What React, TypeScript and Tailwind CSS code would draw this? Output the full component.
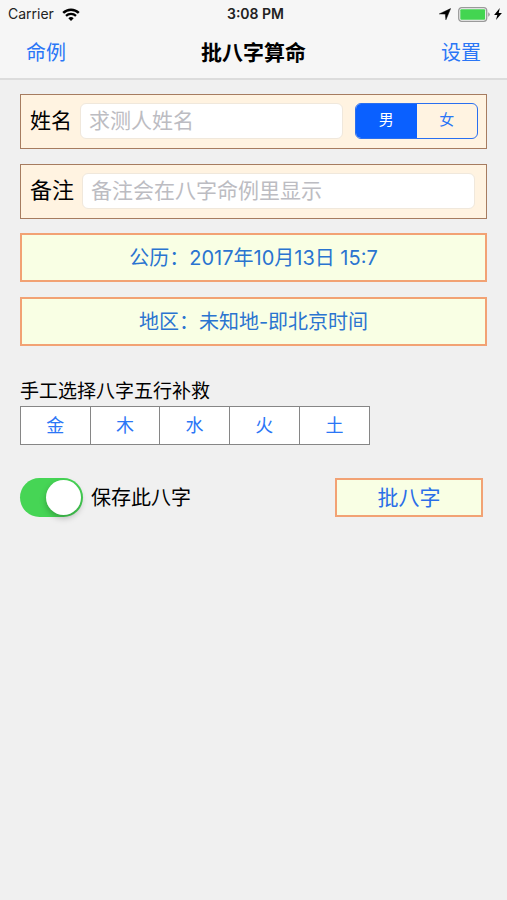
import React, { useState } from "react";

const elements = ["金", "木", "水", "火", "土"];

const StatusBar = () => (
  <div className="grid grid-cols-3 items-center h-7 pl-2 pr-1 text-sm text-[#222]">
    <div className="flex items-center gap-2">
      <span>Carrier</span>
      <svg viewBox="0 0 18 13" className="w-[18px] h-[13px]" fill="none" stroke="#000" aria-hidden="true">
        <path d="M1.2 4.8a11.2 11.2 0 0 1 15.6 0" strokeWidth="2.5" />
        <path d="M4 7.9a7.2 7.2 0 0 1 10 0" strokeWidth="2.2" />
        <path d="M6.3 10.2a3.9 3.9 0 0 1 5.4 0L9 13z" fill="#000" stroke="none" />
      </svg>
    </div>
    <span className="text-center font-semibold">3:08 PM</span>
    <div className="flex items-center justify-end">
      <svg viewBox="0 0 12 12" className="w-3 h-3 mr-[7px]" aria-hidden="true">
        <path d="M11.6.6 6.9 11.8 6.3 6.1.3 5.9z" fill="#000" stroke="#000" strokeWidth="0.5" strokeLinejoin="round" />
      </svg>
      <svg viewBox="0 0 32 15" className="w-8 h-[15px]" aria-hidden="true">
        <rect x="0.7" y="0.7" width="28" height="13.6" rx="3" fill="#f6f6f6" stroke="#9a9a9a" strokeWidth="1.3" />
        <rect x="2.3" y="2.3" width="24.8" height="10.4" rx="1" fill="#43d551" />
        <path d="M30.2 5.2q1.6.8 1.6 2.3t-1.6 2.3z" fill="#9a9a9a" />
      </svg>
      <svg viewBox="0 0 8 12" className="w-2 h-3 ml-1 mr-px" aria-hidden="true">
        <path d="M5.8 0 .1 7h3.2L2 12 7.9 4.9H4.7z" fill="#000" />
      </svg>
    </div>
  </div>
);

const App = () => {
  const [gender, setGender] = useState("male");
  const [picked, setPicked] = useState<string[]>([]);
  const [save, setSave] = useState(true);

  const toggle = (name: string) =>
    setPicked(picked.includes(name) ? picked.filter((p) => p !== name) : [...picked, name]);

  return (
    <div
      lang="zh-CN"
      className="min-h-screen bg-[#f0f0f0] text-black font-[Inter,'Noto_Sans_CJK_SC',sans-serif]"
    >
      <header className="bg-[#f6f6f6] border-b-2 border-[#dcdcdc]">
        <StatusBar />
        <nav className="flex items-center justify-between h-[50px] px-[26px]">
          <a href="#cases" className="text-xl text-[#2a76f6]">命例</a>
          <h1 className="text-[21px] font-bold">批八字算命</h1>
          <a href="#settings" className="text-xl text-[#2a76f6]">设置</a>
        </nav>
      </header>

      <form className="flex flex-col px-5 pt-[14px]" onSubmit={(e) => e.preventDefault()}>
        <div className="flex items-center h-[55px] pl-[9px] pr-2 pb-[2px] bg-[#fff3e1] border border-[#a67c60]">
          <label htmlFor="name" className="text-[21px] shrink-0">姓名</label>
          <input
            id="name"
            type="text"
            placeholder="求测人姓名"
            className="flex-1 min-w-0 h-9 ml-2 mr-3 px-2 text-[21px] bg-white border border-[#f0e8dc] rounded-md placeholder-[#bcbcc2] focus:outline-none"
          />
          <div role="radiogroup" aria-label="性别" className="flex shrink-0 w-[123px] h-9 border border-[#2a6ff0] rounded-md overflow-hidden text-[15px]">
            <label className="flex flex-1 items-center justify-center text-[#2a76f6] has-checked:bg-[#0a60ff] has-checked:text-white cursor-pointer">
              <input type="radio" name="gender" className="sr-only" checked={gender === "male"} onChange={() => setGender("male")} />
              男
            </label>
            <label className="flex flex-1 items-center justify-center text-[#2a76f6] has-checked:bg-[#0a60ff] has-checked:text-white cursor-pointer">
              <input type="radio" name="gender" className="sr-only" checked={gender === "female"} onChange={() => setGender("female")} />
              女
            </label>
          </div>
        </div>

        <div className="flex items-center h-[55px] mt-[15px] pl-[9px] pr-[11px] pb-[2px] bg-[#fff3e1] border border-[#a67c60]">
          <label htmlFor="note" className="text-[22px] shrink-0">备注</label>
          <input
            id="note"
            type="text"
            placeholder="备注会在八字命例里显示"
            className="flex-1 min-w-0 h-9 ml-2 px-2 text-[21px] bg-white border border-[#f0e8dc] rounded-md placeholder-[#bcbcc2] focus:outline-none"
          />
        </div>

        <button type="button" className="h-[49px] mt-[14px] text-xl text-[#2a74d0] bg-[#f9ffe4] border-2 border-[#f2a274]">
          公历：2017年10月13日 15:7
        </button>
        <button type="button" className="h-[49px] mt-[15px] text-xl text-[#2a74d0] bg-[#f9ffe4] border-2 border-[#f2a274]">
          地区：未知地-即北京时间
        </button>

        <h2 className="mt-8 text-[19px] leading-7">手工选择八字五行补救</h2>
        <div className="grid grid-cols-5 w-3/4 h-[39px] bg-white border border-[#868686] divide-x divide-[#868686]">
          {elements.map((name) => (
            <button
              key={name}
              type="button"
              aria-pressed={picked.includes(name)}
              onClick={() => toggle(name)}
              className="text-lg leading-7 text-[#2a76f6] aria-pressed:bg-[#e4eeff]"
            >
              {name}
            </button>
          ))}
        </div>

        <div className="flex items-center justify-between mt-[33px] pr-1">
          <label className="flex items-center gap-2 text-xl">
            <input
              type="checkbox"
              role="switch"
              checked={save}
              onChange={(e) => setSave(e.target.checked)}
              className="appearance-none flex items-center justify-start checked:justify-end w-[63px] h-[39px] p-[2px] rounded-full bg-[#d8d8d8] checked:bg-[#46d555] before:content-[''] before:w-[35px] before:h-[35px] before:rounded-full before:bg-white before:shadow-[0_3px_6px_rgba(0,0,0,0.25)]"
            />
            保存此八字
          </label>
          <button type="submit" className="w-[148px] h-[39px] text-[21px] text-[#2a6ee8] bg-[#f9ffe4] border-2 border-[#f2a274]">
            批八字
          </button>
        </div>
      </form>
    </div>
  );
};

export default App;
